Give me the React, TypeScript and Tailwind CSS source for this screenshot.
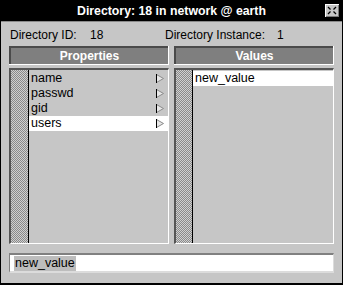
import React from "react";

const stripe =
  "bg-[repeating-conic-gradient(#8a8a8a_0_25%,#d0d0d0_0_50%)] bg-[length:2px_2px]";

function Arrow() {
  return (
    <svg width="8" height="9" viewBox="0 0 8 9" className="block">
      <polygon points="0.5,0.5 7.5,4.5 0.5,8.5" fill="#e8e8e8" stroke="#8a8a8a" />
      <line x1="0.5" y1="0" x2="0.5" y2="9" stroke="#000" />
    </svg>
  );
}

function CloseIcon() {
  return (
    <svg width="14" height="13" viewBox="0 0 14 13" className="block">
      <rect x="0" y="0" width="14" height="13" fill="#c6c6c6" />
      <path d="M0 0H14V1H1V13H0Z" fill="#ffffff" />
      <path d="M13 1H14V13H1V12H13Z" fill="#7a7a7a" />
      <g stroke="#000" strokeWidth="1.2">
        <line x1="3" y1="3" x2="5.5" y2="5.5" />
        <line x1="11" y1="3" x2="8.5" y2="5.5" />
        <line x1="3" y1="10" x2="5.5" y2="7.5" />
        <line x1="11" y1="10" x2="8.5" y2="7.5" />
      </g>
    </svg>
  );
}

function Header({ label }: { label: string }) {
  return (
    <div className="border-b border-r border-white">
      <div className="h-[18px] border-t-2 border-l-2 border-[#4a4a4a] bg-[#7f7f7f] flex items-center justify-center text-white font-bold text-[12px] leading-none">
        {label}
      </div>
    </div>
  );
}

export default function App() {
  const props = ["name", "passwd", "gid", "users"];
  const selected = "users";

  return (
    <div className="w-[343px] h-[285px] bg-[#c6c6c6] border border-black border-b-2 flex flex-col font-['Liberation_Sans',Arial,sans-serif] text-black overflow-hidden">
      {/* title bar */}
      <div className="h-[21px] bg-black border-b border-[#8a8a8a] relative flex items-center justify-center shrink-0">
        <span className="text-white font-bold text-[12.3px] leading-none">
          Directory: 18 in network @ earth
        </span>
        <div className="absolute right-[3px] top-[3px]">
          <CloseIcon />
        </div>
      </div>

      <div className="flex-1 flex flex-col px-[8px]">
        {/* ids */}
        <div className="h-[24px] flex items-center text-[12px] leading-none pl-[1px] pt-[1px]">
          <span className="w-[80px]">Directory ID:</span>
          <span className="w-[75px]">18</span>
          <span className="w-[112px]">Directory Instance:</span>
          <span>1</span>
        </div>

        <div className="grid grid-cols-2 gap-[5px] h-[198px]">
          {/* properties */}
          <div className="flex flex-col">
            <Header label="Properties" />
            <div className="mt-[3px] flex-1 border-t-2 border-l-2 border-[#555] border-b border-r border-b-white border-r-white flex">
              <div className={`w-[18px] ${stripe} border-r border-black`} />
              <div className="flex-1 pt-[1px]">
                {props.map((p) => (
                  <div
                    key={p}
                    className={`h-[15px] flex items-center justify-between pl-[2px] pr-[4px] text-[12.5px] leading-none ${
                      p === selected ? "bg-white" : ""
                    }`}
                  >
                    <span>{p}</span>
                    <Arrow />
                  </div>
                ))}
              </div>
            </div>
          </div>

          {/* values */}
          <div className="flex flex-col">
            <Header label="Values" />
            <div className="mt-[3px] flex-1 border-t-2 border-l-2 border-[#555] border-b border-r border-b-white border-r-white flex">
              <div className={`w-[17px] ${stripe} border-r border-black`} />
              <div className="flex-1 pt-[1px]">
                <div className="h-[15px] flex items-center pl-[2px] bg-white text-[12.5px] leading-none">
                  new_value
                </div>
              </div>
            </div>
          </div>
        </div>

        {/* text field */}
        <div className="mt-[9px] h-[20px] border-t-2 border-l border-[#808080] border-b-2 border-b-[#dcdcdc] border-r border-r-[#dcdcdc] bg-white flex items-center pl-[4px]">
          <span className="bg-[#bdbdbd] text-[12.5px] leading-[15px] px-[1px]">new_value</span>
        </div>
      </div>
    </div>
  );
}
